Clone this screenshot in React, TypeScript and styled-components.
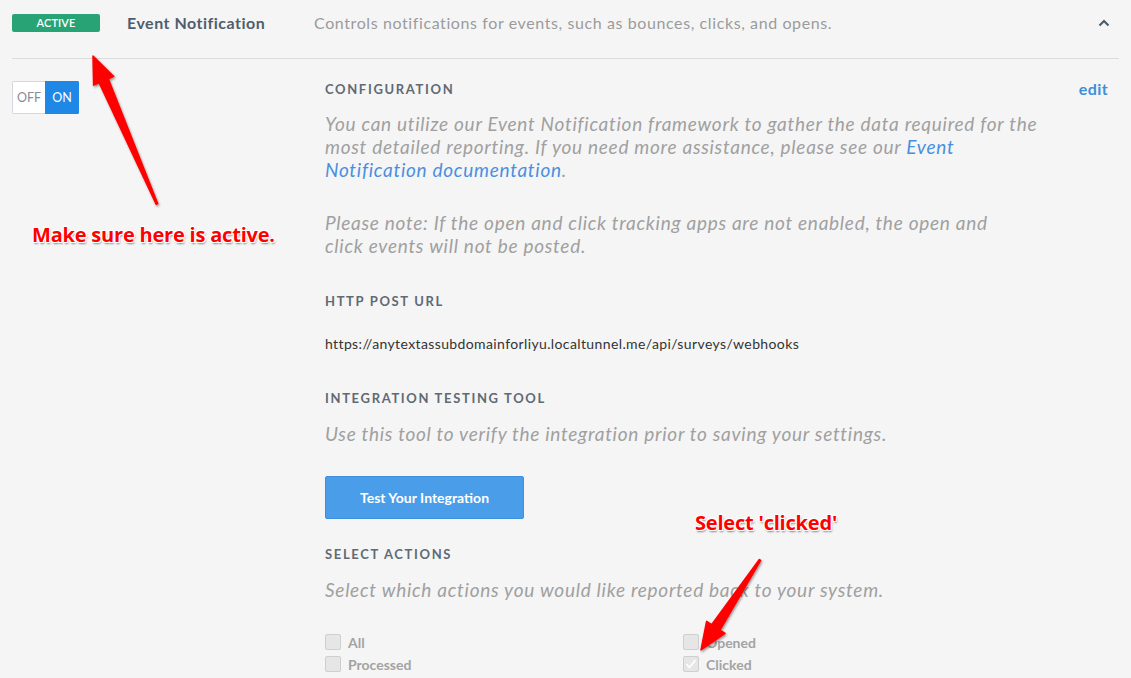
import React from "react";
import styled, { createGlobalStyle } from "styled-components";

const Global = createGlobalStyle`
  html, body { margin: 0; padding: 0; background: #f5f5f5; }
  body { font-family: "Lato", "Open Sans", sans-serif; -webkit-font-smoothing: antialiased; }
  * { box-sizing: border-box; }
`;

const Page = styled.div`
  position: relative;
  width: 1131px;
  height: 678px;
  overflow: hidden;
  background: #f5f5f5;
`;

const Header = styled.div`
  display: flex;
  align-items: center;
  height: 59px;
  padding-bottom: 13px;
  margin: 0 12px;
  border-bottom: 1px solid #dcdcdc;
`;

const Badge = styled.div`
  width: 88px;
  height: 18px;
  border-radius: 2px;
  background: #27a375;
  color: #fff;
  font-size: 11px;
  font-weight: 600;
  display: flex;
  align-items: center;
  justify-content: center;
  letter-spacing: 0.1px;
`;

const Title = styled.div`
  margin-left: 27px;
  width: 187px;
  font-size: 16px;
  font-weight: 700;
  letter-spacing: 0.5px;
  color: #4f5e6e;
`;

const Subtitle = styled.div`
  flex: 1;
  font-size: 16px;
  font-weight: 400;
  letter-spacing: 0.6px;
  color: #9b9b9b;
`;

const Chevron = styled.svg`
  margin-right: 9px;
  width: 12px;
  height: 8px;
`;

const Body = styled.div`
  display: grid;
  grid-template-columns: 313px 1fr;
  padding: 22px 23px 0 12px;
`;

const Toggle = styled.div`
  display: flex;
  width: 67px;
  height: 33px;
  border-radius: 2px;
  overflow: hidden;
  font-size: 12.5px;
`;

const ToggleHalf = styled.div<{ $on?: boolean }>`
  flex: 1;
  display: flex;
  align-items: center;
  justify-content: center;
  background: ${(p) => (p.$on ? "#1f87e5" : "#fff")};
  color: ${(p) => (p.$on ? "#fff" : "#8a8a95")};
  border: 1px solid ${(p) => (p.$on ? "#1f87e5" : "#d6d6dc")};
  border-right: ${(p) => (p.$on ? "1px solid #1f87e5" : "none")};
`;

const Main = styled.div`
  display: flex;
  flex-direction: column;
`;

const LabelRow = styled.div<{ $top?: number }>`
  display: flex;
  justify-content: space-between;
  align-items: center;
  margin-top: ${(p) => p.$top ?? 0}px;
  height: 16px;
`;

const Label = styled.div`
  font-size: 13px;
  font-weight: 700;
  letter-spacing: 1.65px;
  color: #5f6a74;
`;

const Edit = styled.a`
  font-size: 16px;
  font-weight: 700;
  letter-spacing: 0.4px;
  color: #3c8fd9;
  text-decoration: none;
  margin-top: -2px;
`;

const Para = styled.p<{ $top: number }>`
  margin: ${(p) => p.$top}px 0 0;
  font-size: 19px;
  line-height: 23px;
  font-style: italic;
  font-weight: 400;
  letter-spacing: 0.72px;
  color: #a0a0a0;
  white-space: nowrap;
`;

const Link = styled.a`
  color: #4a8fdf;
  text-decoration: none;
`;

const Url = styled.div`
  margin-top: 25px;
  font-size: 14px;
  line-height: 20px;
  letter-spacing: 0.38px;
  color: #333;
`;

const Button = styled.button`
  margin-top: 31px;
  width: 199px;
  height: 43px;
  border: 1px solid #3f8fdc;
  border-radius: 2px;
  background: #4a9de9;
  color: #fff;
  font-family: inherit;
  font-size: 14px;
  font-weight: 700;
`;

const Checks = styled.div`
  margin-top: 30px;
  display: grid;
  grid-template-columns: 358px 1fr;
  grid-auto-rows: 22px;
`;

const CheckItem = styled.label`
  display: flex;
  align-items: center;
  gap: 7px;
  font-size: 14px;
  font-weight: 700;
  color: #a3a3a3;
`;

const Box = styled.span`
  width: 16px;
  height: 16px;
  border-radius: 2px;
  border: 1px solid #cfcfcf;
  background: #e6e6e6;
  display: flex;
  align-items: center;
  justify-content: center;
`;

const Note = styled.div<{ $x: number; $y: number }>`
  position: absolute;
  left: ${(p) => p.$x}px;
  top: ${(p) => p.$y}px;
  font-family: "Open Sans", sans-serif;
  font-size: 20px;
  font-weight: 700;
  color: #ff0000;
  letter-spacing: -0.2px;
  white-space: nowrap;
  text-shadow: 1px 1px 0 #fff, -1px -1px 0 #fff, 1px -1px 0 #fff, -1px 1px 0 #fff,
    1px 2px 2px rgba(0, 0, 0, 0.45);
`;

const Overlay = styled.svg`
  position: absolute;
  left: 0;
  top: 0;
  pointer-events: none;
`;

function arrowPoints(tx: number, ty: number, px: number, py: number) {
  const dx = px - tx;
  const dy = py - ty;
  const len = Math.hypot(dx, dy);
  const ux = dx / len;
  const uy = dy / len;
  const nx = -uy;
  const ny = ux;
  const headLen = 24;
  const headW = 11;
  const shaftW = 5;
  const bx = px - ux * headLen;
  const by = py - uy * headLen;
  const nb = (s: number) => [bx + nx * s - ux * 3, by + ny * s - uy * 3];
  const pts = [
    [tx + nx * 0.8, ty + ny * 0.8],
    nb(shaftW),
    nb(headW),
    [px, py],
    nb(-headW),
    nb(-shaftW),
    [tx - nx * 0.8, ty - ny * 0.8],
  ];
  return pts.map((p) => p.join(",")).join(" ");
}

export default function App() {
  return (
    <Page>
      <Global />
      <Header>
        <Badge>ACTIVE</Badge>
        <Title>Event Notification</Title>
        <Subtitle>Controls notifications for events, such as bounces, clicks, and opens.</Subtitle>
        <Chevron viewBox="0 0 12 8">
          <polyline points="1.5,6.5 6,2 10.5,6.5" fill="none" stroke="#4f5e6e" strokeWidth="2.2" />
        </Chevron>
      </Header>
      <Body>
        <div>
          <Toggle>
            <ToggleHalf>OFF</ToggleHalf>
            <ToggleHalf $on>ON</ToggleHalf>
          </Toggle>
        </div>
        <Main>
          <LabelRow>
            <Label>CONFIGURATION</Label>
            <Edit href="#">edit</Edit>
          </LabelRow>
          <Para $top={15}>
            You can utilize our Event Notification framework to gather the data required for the
            <br />
            most detailed reporting. If you need more assistance, please see our <Link href="#">Event</Link>
            <br />
            <Link href="#">Notification documentation</Link>.
          </Para>
          <Para $top={30}>
            Please note: If the open and click tracking apps are not enabled, the open and
            <br />
            click events will not be posted.
          </Para>
          <LabelRow $top={36}>
            <Label>HTTP POST URL</Label>
          </LabelRow>
          <Url>https://anytextassubdomainforliyu.localtunnel.me/api/surveys/webhooks</Url>
          <LabelRow $top={36}>
            <Label>INTEGRATION TESTING TOOL</Label>
          </LabelRow>
          <Para $top={16}>Use this tool to verify the integration prior to saving your settings.</Para>
          <div>
            <Button>Test Your Integration</Button>
          </div>
          <LabelRow $top={27}>
            <Label>SELECT ACTIONS</Label>
          </LabelRow>
          <Para $top={16}>Select which actions you would like reported back to your system.</Para>
          <Checks>
            <CheckItem>
              <Box />
              All
            </CheckItem>
            <CheckItem>
              <Box />
              Opened
            </CheckItem>
            <CheckItem>
              <Box />
              Processed
            </CheckItem>
            <CheckItem>
              <Box>
                <svg width="12" height="10" viewBox="0 0 12 10">
                  <polyline points="1.5,5 4.5,8.5 10.5,1" fill="none" stroke="#fff" strokeWidth="1.6" />
                </svg>
              </Box>
              Clicked
            </CheckItem>
          </Checks>
        </Main>
      </Body>
      <Note $x={32} $y={221}>Make sure here is active.</Note>
      <Note $x={695} $y={509}>Select 'clicked'</Note>
      <Overlay width="1131" height="678" viewBox="0 0 1131 678">
        <defs>
          <filter id="sh" x="-20%" y="-20%" width="140%" height="140%">
            <feDropShadow dx="1" dy="1.5" stdDeviation="1" floodColor="#000" floodOpacity="0.4" />
          </filter>
        </defs>
        <polygon points={arrowPoints(157, 204, 93, 56)} fill="#ff0000" filter="url(#sh)" strokeLinejoin="round" stroke="#ff0000" strokeWidth="1.5" />
        <polygon points={arrowPoints(760, 560, 701, 650)} fill="#ff0000" filter="url(#sh)" strokeLinejoin="round" stroke="#ff0000" strokeWidth="1.5" />
      </Overlay>
    </Page>
  );
}
